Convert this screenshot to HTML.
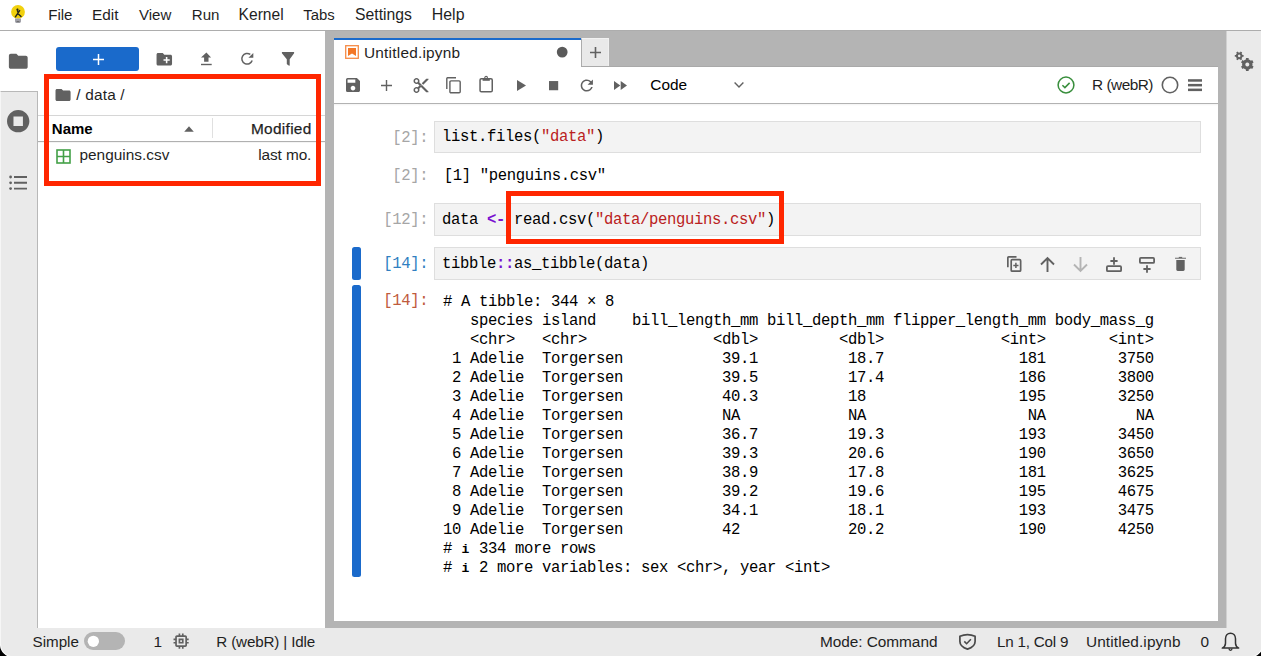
<!DOCTYPE html>
<html><head><meta charset="utf-8">
<style>
*{box-sizing:border-box;margin:0;padding:0}
html,body{width:1261px;height:656px;overflow:hidden;background:#fff;font-family:"Liberation Sans",sans-serif;color:#212121}
.a{position:absolute}
.t{position:absolute;white-space:pre;line-height:1}
.m{font-family:"Liberation Mono",monospace}
svg{position:absolute;display:block;overflow:visible}
</style></head><body>
<div class="a" style="left:0px;top:0px;width:1261px;height:31px;background:#fff;border-bottom:1px solid #adadad"></div>
<div class="t" style="left:48.20px;top:7.22px;font-size:15.1px;color:#1f1f1f;font-weight:400;">File</div>
<div class="t" style="left:92.00px;top:6.96px;font-size:15.4px;color:#1f1f1f;font-weight:400;">Edit</div>
<div class="t" style="left:139.00px;top:7.26px;font-size:15.05px;color:#1f1f1f;font-weight:400;">View</div>
<div class="t" style="left:191.80px;top:7.22px;font-size:15.1px;color:#1f1f1f;font-weight:400;">Run</div>
<div class="t" style="left:238.60px;top:6.79px;font-size:15.6px;color:#1f1f1f;font-weight:400;">Kernel</div>
<div class="t" style="left:303.20px;top:7.89px;font-size:14.9px;color:#1f1f1f;font-weight:400;">Tabs</div>
<div class="t" style="left:355.00px;top:6.67px;font-size:15.75px;color:#1f1f1f;font-weight:400;">Settings</div>
<div class="t" style="left:431.80px;top:6.54px;font-size:15.9px;color:#1f1f1f;font-weight:400;">Help</div>
<svg style="left:0px;top:0px;" width="36" height="30" viewBox="0 0 36 30"><circle cx="18" cy="11.9" r="6.9" fill="#f1d10e"/><path d="M15 18.6h6v2.6c0 1-.8 1.8-1.8 1.8h-2.4c-1 0-1.8-.8-1.8-1.8z" fill="#a0a0a8"/><path d="M16.6 21.6h2.8" stroke="#6a6a6a" stroke-width="1"/><path d="M15.4 16.8l4.2-6.2M17.6 13.3l3.4 3.2M17.4 9.6l.3 2" stroke="#2a2a1a" stroke-width="1.5" fill="none" stroke-linecap="round"/><circle cx="17.5" cy="9.5" r="1" fill="#2a2a1a"/></svg>
<div class="a" style="left:0px;top:31px;width:38px;height:597px;background:#fff"></div>
<div class="a" style="left:0px;top:91px;width:38px;height:537px;background:#eaeaea;border-top:1px solid #b8b8b8;border-right:1px solid #b8b8b8"></div>
<svg style="left:7.2px;top:50.1px;" width="22.56" height="22.56" viewBox="0 0 24 24"><path d="M10 4H4c-1.1 0-1.99.9-1.99 2L2 18c0 1.1.9 2 2 2h16c1.1 0 2-.9 2-2V8c0-1.1-.9-2-2-2h-8l-2-2z" fill="#616161"/></svg>
<svg style="left:6.3px;top:109.4px;" width="24.4" height="24.4" viewBox="0 0 24 24"><path d="M12 1C5.9 1 1 5.9 1 12s4.9 11 11 11 11-4.9 11-11S18.1 1 12 1zm4.65 15.65h-9.3v-9.3h9.3z" fill="#616161"/></svg>
<svg style="left:9px;top:174.5px;" width="19" height="16" viewBox="0 0 19 16"><circle cx="1.6" cy="2" r="1.4" fill="#616161"/><circle cx="1.6" cy="7.8" r="1.4" fill="#616161"/><circle cx="1.6" cy="13.6" r="1.4" fill="#616161"/><path d="M5 2h13M5 7.8h13M5 13.6h13" stroke="#616161" stroke-width="1.9"/></svg>
<div class="a" style="left:38px;top:31px;width:287px;height:597px;background:#fff"></div>
<div class="a" style="left:56px;top:47px;width:83px;height:24px;background:#1a6acb;border-radius:3px"></div>
<svg style="left:92.8px;top:53.8px;" width="11" height="11" viewBox="0 0 11 11"><path d="M5.5 0v11M0 5.5h11" stroke="#fff" stroke-width="1.5"/></svg>
<svg style="left:155px;top:50px;" width="18.6" height="18.6" viewBox="0 0 24 24"><path d="M20 6h-8l-2-2H4c-1.11 0-1.99.89-1.99 2L2 18c0 1.11.89 2 2 2h16c1.11 0 2-.89 2-2V8c0-1.11-.89-2-2-2zm-1 8h-3v3h-2v-3h-3v-2h3V9h2v3h3v2z" fill="#616161"/></svg>
<svg style="left:200px;top:52px;" width="13" height="14" viewBox="0 0 13 14"><path d="M6.4.4L11.1 5.5H8.5v4.2H4.1V5.5H1z" fill="#616161"/><rect x="1" y="11.8" width="10.7" height="1.4" fill="#616161"/></svg>
<svg style="left:240px;top:52px;" width="15" height="14" viewBox="0 0 15 14"><path d="M12.2 8.6A5.35 5.35 0 1 1 10.3 2.4" fill="none" stroke="#616161" stroke-width="1.5"/><path d="M13.3 .9v4.9H8.4z" fill="#616161"/></svg>
<svg style="left:281px;top:51px;" width="14" height="16" viewBox="0 0 14 16"><path d="M.9 1.1H13.1V2.3L8.7 8.2V14.8L7.2 14.3 5.8 13.1V8.2L.9 2.3z" fill="#616161"/></svg>
<svg style="left:54.4px;top:85.9px;" width="18.1" height="18.1" viewBox="0 0 24 24"><path d="M10 4H4c-1.1 0-1.99.9-1.99 2L2 18c0 1.1.9 2 2 2h16c1.1 0 2-.9 2-2V8c0-1.1-.9-2-2-2h-8l-2-2z" fill="#616161"/></svg>
<div class="t" style="left:76.20px;top:86.96px;font-size:15.4px;color:#1f1f1f;font-weight:400;letter-spacing:.2px">/ data /</div>
<div class="a" style="left:38px;top:115px;width:287px;height:1px;background:#d6d6d6"></div>
<div class="t" style="left:51.80px;top:121.30px;font-size:15px;color:#000;font-weight:700;">Name</div>
<svg style="left:183.5px;top:126px;" width="10" height="6" viewBox="0 0 10 6"><path d="M5 .3L9.8 5.7H.2z" fill="#616161"/></svg>
<div class="a" style="left:212px;top:118px;width:1px;height:20px;background:#e0e0e0"></div>
<div class="t" style="left:251.00px;top:121.16px;font-size:15.4px;color:#1f1f1f;font-weight:400;letter-spacing:.3px;-webkit-text-stroke:.25px #1f1f1f">Modified</div>
<div class="a" style="left:38px;top:141px;width:287px;height:1px;background:#b0b0b0"></div>
<div class="a" style="left:38px;top:142px;width:287px;height:1px;background:#f4f4f4"></div>
<svg style="left:56px;top:149px;" width="15" height="15" viewBox="0 0 15 15"><rect x="1" y="1" width="13" height="13" fill="none" stroke="#43a047" stroke-width="1.6"/><path d="M7.5 1v13M1 7.5h13" stroke="#43a047" stroke-width="1.6"/></svg>
<div class="t" style="left:79.50px;top:147.46px;font-size:15.4px;color:#1f1f1f;font-weight:400;">penguins.csv</div>
<div class="t" style="left:258.20px;top:147.46px;font-size:15.4px;color:#1f1f1f;font-weight:400;letter-spacing:-.1px">last mo.</div>
<div class="a" style="left:325px;top:31px;width:901px;height:597px;background:#b4b4b4"></div>
<div class="a" style="left:1226px;top:31px;width:35px;height:597px;background:#eaeaea;border-left:1px solid #d0d0d0"></div>
<svg style="left:1226px;top:40px;" width="35" height="40" viewBox="1226 40 35 40"><path fill-rule="evenodd" fill="#616161" d="M1245.09 59.79 L1245.95 59.48 L1245.93 58.04 L1248.67 58.04 L1248.65 59.48 L1249.51 59.79 L1250.27 60.23 L1250.98 60.82 L1252.20 60.08 L1253.58 62.46 L1252.32 63.15 L1252.48 64.06 L1252.48 64.94 L1252.32 65.85 L1253.58 66.54 L1252.20 68.92 L1250.98 68.18 L1250.27 68.77 L1249.51 69.21 L1248.65 69.52 L1248.67 70.96 L1245.93 70.96 L1245.95 69.52 L1245.09 69.21 L1244.33 68.77 L1243.62 68.18 L1242.40 68.92 L1241.02 66.54 L1242.28 65.85 L1242.12 64.94 L1242.12 64.06 L1242.28 63.15 L1241.02 62.46 L1242.40 60.08 L1243.62 60.82 L1244.33 60.23Z M1247.3 62.5a2 2 0 1 0 .01 0z"/><path fill-rule="evenodd" fill="#616161" d="M1239.48 52.51 L1240.08 52.62 L1240.59 51.62 L1242.21 52.56 L1241.60 53.50 L1241.99 53.96 L1242.28 54.45 L1242.48 55.02 L1243.60 54.96 L1243.60 56.84 L1242.48 56.78 L1242.28 57.35 L1241.99 57.84 L1241.60 58.30 L1242.21 59.24 L1240.59 60.18 L1240.08 59.18 L1239.48 59.29 L1238.92 59.29 L1238.32 59.18 L1237.81 60.18 L1236.19 59.24 L1236.80 58.30 L1236.41 57.84 L1236.12 57.35 L1235.92 56.78 L1234.80 56.84 L1234.80 54.96 L1235.92 55.02 L1236.12 54.45 L1236.41 53.96 L1236.80 53.50 L1236.19 52.56 L1237.81 51.62 L1238.32 52.62 L1238.92 52.51Z M1239.2 54.6a1.3 1.3 0 1 0 .01 0z"/></svg>
<div class="a" style="left:334px;top:38px;width:247px;height:29px;background:#fff;border-top:2px solid #1a6acb"></div>
<div class="a" style="left:581px;top:38px;width:28px;height:28px;background:#e9e9e9;border-top:1px solid #f2f2f2;border-right:1px solid #f0f0f0;border-left:1px solid #acacac"></div>
<div class="a" style="left:581px;top:66px;width:637px;height:1px;background:#a9a9a9"></div>
<svg style="left:589.8px;top:46.8px;" width="11" height="11" viewBox="0 0 11 11"><path d="M5.5 0v11M0 5.5h11" stroke="#616161" stroke-width="1.6"/></svg>
<svg style="left:345px;top:45px;" width="14" height="14" viewBox="0 0 14 14"><rect x=".7" y=".7" width="12.6" height="12.6" fill="none" stroke="#f37726" stroke-width="1.3" opacity=".85"/><path d="M3 3h8v8L7 8.6 3 11z" fill="#f37726"/></svg>
<div class="t" style="left:364.00px;top:44.96px;font-size:15.4px;color:#1f1f1f;font-weight:400;letter-spacing:.22px">Untitled.ipynb</div>
<svg style="left:555px;top:45px;" width="14" height="14" viewBox="0 0 14 14"><circle cx="7.2" cy="7.1" r="5.4" fill="#5a5a5a"/></svg>
<div class="a" style="left:334px;top:67px;width:884px;height:554px;background:#fff"></div>
<div class="a" style="left:334px;top:103px;width:884px;height:1px;background:#b2b2b2"></div>
<div class="a" style="left:334px;top:104px;width:884px;height:2px;background:linear-gradient(#f3f3f3,#fff)"></div>
<svg style="left:346px;top:78px;" width="14" height="14" viewBox="3 3 18 18"><path d="M17 3H5a2 2 0 0 0-2 2v14a2 2 0 0 0 2 2h14c1.1 0 2-.9 2-2V7l-4-4zm-5 16c-1.66 0-3-1.34-3-3s1.34-3 3-3 3 1.34 3 3-1.34 3-3 3zm3-10H5V5h10v4z" fill="#616161"/></svg>
<svg style="left:380.5px;top:79.5px;" width="11" height="11" viewBox="0 0 11 11"><path d="M5.5 0v11M0 5.5h11" stroke="#616161" stroke-width="1.4"/></svg>
<svg style="left:412.5px;top:77.5px;" width="16" height="15" viewBox="2 2 20 20"><path d="M9.64 7.64c.23-.5.36-1.05.36-1.64 0-2.21-1.79-4-4-4S2 3.79 2 6s1.79 4 4 4c.59 0 1.14-.13 1.64-.36L10 12l-2.36 2.36C7.14 14.13 6.59 14 6 14c-2.21 0-4 1.79-4 4s1.79 4 4 4 4-1.79 4-4c0-.59-.13-1.14-.36-1.64L12 14l7 7h3v-1L9.64 7.64zM6 8c-1.1 0-2-.89-2-2s.9-2 2-2 2 .89 2 2-.9 2-2 2zm0 12c-1.1 0-2-.89-2-2s.9-2 2-2 2 .89 2 2-.9 2-2 2zm6-7.5c-.28 0-.5-.22-.5-.5s.22-.5.5-.5.5.22.5.5-.22.5-.5.5zM19 3l-6 6 2 2 7-7V3z" fill="#616161"/></svg>
<svg style="left:445.5px;top:77px;" width="15" height="16.5" viewBox="0 0 15 16.5"><path d="M.8 12V1.4c0-.4.3-.6.6-.6H10" fill="none" stroke="#616161" stroke-width="1.4"/><rect x="3.9" y="3.9" width="10.3" height="11.9" rx="1.1" fill="none" stroke="#616161" stroke-width="1.4"/></svg>
<svg style="left:479px;top:75px;" width="14" height="18" viewBox="0 0 14 18"><rect x="1.05" y="3.65" width="12.2" height="13.1" rx="1.3" fill="none" stroke="#616161" stroke-width="1.5"/><rect x="3.6" y="3.3" width="7.2" height="2.5" fill="#616161"/><circle cx="7.1" cy="2.75" r="1.35" fill="none" stroke="#616161" stroke-width="1.1"/></svg>
<svg style="left:517px;top:80px;" width="9" height="11" viewBox="0 0 9 11"><path d="M0 0L9 5.5 0 11z" fill="#616161"/></svg>
<svg style="left:548.7px;top:80.5px;" width="9.2" height="9.3" viewBox="0 0 10 10"><rect width="10" height="10" fill="#616161"/></svg>
<svg style="left:579.5px;top:79px;" width="14" height="13" viewBox="4 3.5 16.5 17"><path d="M17.65 6.35A7.96 7.96 0 0 0 12 4c-4.42 0-7.99 3.58-7.99 8s3.57 8 7.99 8c3.73 0 6.84-2.55 7.73-6h-2.08A5.99 5.99 0 0 1 12 18c-3.31 0-6-2.69-6-6s2.69-6 6-6c1.66 0 3.14.69 4.22 1.78L13 11h7V4z" fill="#616161"/></svg>
<svg style="left:614px;top:80.5px;" width="13" height="9" viewBox="0 0 13 9"><path d="M0 0l6.3 4.5L0 9zM6.7 0L13 4.5 6.7 9z" fill="#616161"/></svg>
<div class="t" style="left:650.30px;top:76.96px;font-size:15.4px;color:#000;font-weight:400;">Code</div>
<svg style="left:733.5px;top:82px;" width="10" height="6" viewBox="0 0 10 6"><path d="M.6.6L5 5 9.4.6" fill="none" stroke="#616161" stroke-width="1.4"/></svg>
<svg style="left:1056.8px;top:75.7px;" width="18" height="18" viewBox="0 0 18 18"><circle cx="9" cy="9" r="7.9" fill="none" stroke="#388e3c" stroke-width="1.5"/><path d="M5.4 9.2l2.5 2.4 4.7-4.7" fill="none" stroke="#388e3c" stroke-width="1.5"/></svg>
<div class="t" style="left:1092.00px;top:77.46px;font-size:15.4px;color:#1f1f1f;font-weight:400;letter-spacing:-.5px">R (webR)</div>
<svg style="left:1160.8px;top:75.6px;" width="18" height="18" viewBox="0 0 18 18"><circle cx="9" cy="9" r="7.7" fill="none" stroke="#616161" stroke-width="1.6"/></svg>
<svg style="left:1188px;top:79px;" width="14" height="13" viewBox="0 0 14 13"><rect x="0" y=".2" width="14" height="2.5" fill="#616161"/><rect x="0" y="4.9" width="14" height="2.5" fill="#616161"/><rect x="0" y="9.6" width="14" height="2.5" fill="#616161"/></svg>
<div class="a" style="left:434px;top:121px;width:767px;height:32px;background:#f3f3f3;border:1px solid #dedede"></div>
<div class="t m" style="left:392.30px;top:130.84px;font-size:15.6px;letter-spacing:-0.360px;color:#a6a6a6;">[2]:</div>
<div class="t m" style="left:442.00px;top:129.64px;font-size:15.6px;letter-spacing:-0.360px;color:#000;">list.files(<span style="color:#ba2121">"data"</span>)</div>
<div class="t m" style="left:392.30px;top:168.84px;font-size:15.6px;letter-spacing:-0.360px;color:#a6a6a6;">[2]:</div>
<div class="t m" style="left:443.80px;top:169.04px;font-size:15.6px;letter-spacing:-0.360px;color:#000;">[1] "penguins.csv"</div>
<div class="a" style="left:434px;top:203px;width:767px;height:33px;background:#f3f3f3;border:1px solid #dedede"></div>
<div class="t m" style="left:383.30px;top:213.34px;font-size:15.6px;letter-spacing:-0.360px;color:#a6a6a6;">[12]:</div>
<div class="t m" style="left:442.00px;top:212.54px;font-size:15.6px;letter-spacing:-0.360px;color:#000;">data <span style="color:#7a12d0;font-weight:700">&lt;-</span> read.csv(<span style="color:#ba2121">"data/penguins.csv"</span>)</div>
<div class="a" style="left:352px;top:247px;width:9px;height:33px;background:#1a6acb;border-radius:2.5px"></div>
<div class="a" style="left:434px;top:247px;width:767px;height:33px;background:#f3f3f3;border:1px solid #dedede"></div>
<div class="t m" style="left:383.30px;top:257.34px;font-size:15.6px;letter-spacing:-0.360px;color:#307fc1;">[14]:</div>
<div class="t m" style="left:442.00px;top:256.54px;font-size:15.6px;letter-spacing:-0.360px;color:#000;">tibble<span style="color:#7a12d0;font-weight:700">::</span>as_tibble(data)</div>
<svg style="left:1007px;top:256px;" width="14.5" height="16" viewBox="0 0 14.5 16"><path d="M.85 11.2V1.6c0-.5.3-.75.75-.75h7.9" fill="none" stroke="#616161" stroke-width="1.7"/><rect x="4.2" y="3.7" width="9.45" height="11.45" rx="1" fill="none" stroke="#616161" stroke-width="1.7"/><path d="M8.9 6.8v5.2M6.3 9.4h5.2" stroke="#616161" stroke-width="1.5"/></svg>
<svg style="left:1040px;top:257px;" width="15" height="15" viewBox="0 0 15 15"><path d="M7.5 15V1.4M1 7.5l6.5-6.5L14 7.5" fill="none" stroke="#616161" stroke-width="1.9"/></svg>
<svg style="left:1073px;top:257px;" width="15" height="15" viewBox="0 0 15 15"><path d="M7.5 0v13.6M1 7.5l6.5 6.5L14 7.5" fill="none" stroke="#b4b4b4" stroke-width="1.9"/></svg>
<svg style="left:1106px;top:257px;" width="16" height="15" viewBox="0 0 16 15"><rect x=".9" y="9.2" width="14.2" height="5" rx="1" fill="none" stroke="#616161" stroke-width="1.8"/><path d="M8 .3v7.4M4.4 4h7.2" stroke="#616161" stroke-width="1.8"/></svg>
<svg style="left:1139px;top:257px;" width="16" height="16" viewBox="0 0 16 16"><rect x=".9" y=".9" width="14.2" height="5" rx="1" fill="none" stroke="#616161" stroke-width="1.8"/><path d="M8 8.2v7.6M4.4 12h7.2" stroke="#616161" stroke-width="1.8"/></svg>
<svg style="left:1175px;top:257px;" width="11" height="14" viewBox="0 0 11 14"><path d="M1.3 3h8.4v9.6c0 .8-.6 1.4-1.4 1.4H2.7c-.8 0-1.4-.6-1.4-1.4z" fill="#616161"/><path d="M0 1.3h11" stroke="#8a8a8a" stroke-width="1.3"/><path d="M3.8.4h3.4" stroke="#616161" stroke-width="1"/></svg>
<div class="a" style="left:352px;top:285px;width:9px;height:292px;background:#1a6acb;border-radius:2.5px"></div>
<div class="t m" style="left:383.30px;top:294.44px;font-size:15.6px;letter-spacing:-0.360px;color:#bf5b3d;">[14]:</div>
<div class="t m" style="left:443.00px;top:294.64px;font-size:15.6px;letter-spacing:-0.360px;color:#000;"># A tibble: 344 × 8</div>
<div class="t m" style="left:443.00px;top:313.64px;font-size:15.6px;letter-spacing:-0.360px;color:#000;">   species island    bill_length_mm bill_depth_mm flipper_length_mm body_mass_g</div>
<div class="t m" style="left:443.00px;top:332.64px;font-size:15.6px;letter-spacing:-0.360px;color:#000;">   &lt;chr&gt;   &lt;chr&gt;              &lt;dbl&gt;         &lt;dbl&gt;             &lt;int&gt;       &lt;int&gt;</div>
<div class="t m" style="left:443.00px;top:351.64px;font-size:15.6px;letter-spacing:-0.360px;color:#000;"> 1 Adelie  Torgersen           39.1          18.7               181        3750</div>
<div class="t m" style="left:443.00px;top:370.64px;font-size:15.6px;letter-spacing:-0.360px;color:#000;"> 2 Adelie  Torgersen           39.5          17.4               186        3800</div>
<div class="t m" style="left:443.00px;top:389.64px;font-size:15.6px;letter-spacing:-0.360px;color:#000;"> 3 Adelie  Torgersen           40.3          18                 195        3250</div>
<div class="t m" style="left:443.00px;top:408.64px;font-size:15.6px;letter-spacing:-0.360px;color:#000;"> 4 Adelie  Torgersen           NA            NA                  NA          NA</div>
<div class="t m" style="left:443.00px;top:427.64px;font-size:15.6px;letter-spacing:-0.360px;color:#000;"> 5 Adelie  Torgersen           36.7          19.3               193        3450</div>
<div class="t m" style="left:443.00px;top:446.64px;font-size:15.6px;letter-spacing:-0.360px;color:#000;"> 6 Adelie  Torgersen           39.3          20.6               190        3650</div>
<div class="t m" style="left:443.00px;top:465.64px;font-size:15.6px;letter-spacing:-0.360px;color:#000;"> 7 Adelie  Torgersen           38.9          17.8               181        3625</div>
<div class="t m" style="left:443.00px;top:484.64px;font-size:15.6px;letter-spacing:-0.360px;color:#000;"> 8 Adelie  Torgersen           39.2          19.6               195        4675</div>
<div class="t m" style="left:443.00px;top:503.64px;font-size:15.6px;letter-spacing:-0.360px;color:#000;"> 9 Adelie  Torgersen           34.1          18.1               193        3475</div>
<div class="t m" style="left:443.00px;top:522.64px;font-size:15.6px;letter-spacing:-0.360px;color:#000;">10 Adelie  Torgersen           42            20.2               190        4250</div>
<div class="t m" style="left:443.00px;top:541.64px;font-size:15.6px;letter-spacing:-0.360px;color:#000;"># <span style="display:inline-block;width:9px;text-align:center;font-weight:700;font-size:13px;letter-spacing:0">i</span> 334 more rows</div>
<div class="t m" style="left:443.00px;top:560.64px;font-size:15.6px;letter-spacing:-0.360px;color:#000;"># <span style="display:inline-block;width:9px;text-align:center;font-weight:700;font-size:13px;letter-spacing:0">i</span> 2 more variables: sex &lt;chr&gt;, year &lt;int&gt;</div>
<div class="a" style="left:0px;top:628px;width:1261px;height:28px;background:#eaeaea"></div>
<div class="t" style="left:32.50px;top:634.13px;font-size:15.2px;color:#1f1f1f;font-weight:400;">Simple</div>
<div class="a" style="left:84px;top:632px;width:41px;height:18px;background:#b4b4b4;border-radius:9px"></div>
<svg style="left:87px;top:635px;" width="13" height="13" viewBox="0 0 13 13"><circle cx="6.35" cy="6.35" r="5.65" fill="#fff"/></svg>
<div class="t" style="left:153.50px;top:633.96px;font-size:15.4px;color:#1f1f1f;font-weight:400;">1</div>
<svg style="left:171.4px;top:631.2px;" width="20.2" height="20.2" viewBox="0 0 24 24"><path d="M15 9H9v6h6V9zm-2 4h-2v-2h2v2zm8-2V9h-2V7c0-1.1-.9-2-2-2h-2V3h-2v2h-2V3H9v2H7c-1.1 0-2 .9-2 2v2H3v2h2v2H3v2h2v2c0 1.1.9 2 2 2h2v2h2v-2h2v2h2v-2h2c1.1 0 2-.9 2-2v-2h2v-2h-2v-2h2zm-4 6H7V7h10v10z" fill="#616161"/></svg>
<div class="t" style="left:216.30px;top:634.13px;font-size:15.2px;color:#1f1f1f;font-weight:400;letter-spacing:-.15px">R (webR) | Idle</div>
<div class="t" style="left:820.00px;top:633.96px;font-size:15.4px;color:#1f1f1f;font-weight:400;letter-spacing:-.05px">Mode: Command</div>
<svg style="left:958px;top:632.5px;" width="19" height="17" viewBox="0 0 19 17"><path d="M1.9 3.3Q9.5 -.2 17.1 3.3V8.4C17.1 12 13.8 14.6 9.5 16.1 5.2 14.6 1.9 12 1.9 8.4Z" fill="none" stroke="#4a4a4a" stroke-width="1.7" stroke-linejoin="round"/><path d="M6.3 8.4l2.3 2.3 4.3-4.4" fill="none" stroke="#4a4a4a" stroke-width="1.6"/></svg>
<div class="t" style="left:997.00px;top:634.13px;font-size:15.2px;color:#1f1f1f;font-weight:400;letter-spacing:-.2px">Ln 1, Col 9</div>
<div class="t" style="left:1086.00px;top:633.96px;font-size:15.4px;color:#1f1f1f;font-weight:400;letter-spacing:.1px">Untitled.ipynb</div>
<div class="t" style="left:1200.50px;top:633.96px;font-size:15.4px;color:#1f1f1f;font-weight:400;">0</div>
<svg style="left:1221px;top:632px;" width="19" height="20" viewBox="0 0 19 20"><path d="M9.5 1.2c-3 0-5 2.4-5 5.6v4.4c0 2.3-1.3 3.8-3.2 4.9h16.4c-1.9-1.1-3.2-2.6-3.2-4.9V6.8c0-3.2-2-5.6-5-5.6z" fill="none" stroke="#333" stroke-width="1.5" stroke-linejoin="round"/><path d="M8 16.6c0 1.1.6 1.8 1.5 1.8s1.5-.7 1.5-1.8" fill="none" stroke="#333" stroke-width="1.3"/></svg>
<div class="a" style="left:44px;top:74px;width:277px;height:112px;border:5px solid #ff2600"></div>
<div class="a" style="left:506px;top:191px;width:278px;height:53px;border:5px solid #ff2600"></div>
<div class="a" style="left:0px;top:31px;width:1px;height:615px;background:rgba(255,255,255,.55)"></div>
<svg style="left:0;top:636px" width="20" height="20" viewBox="0 636 20 20"><path d="M0 644.4A13 13 0 0 0 13 657.4H0z" fill="#000"/><path d="M.5 644.4A12.5 12.5 0 0 0 13 656.9" fill="none" stroke="#fff" stroke-opacity=".75" stroke-width="1"/></svg>
<svg style="left:1240px;top:636px" width="21" height="20" viewBox="1240 636 21 20"><path d="M1263.1 644.4A13 13 0 0 1 1250.1 657.4H1263.1z" fill="#000"/><path d="M1262.6 644.4A12.5 12.5 0 0 1 1250.1 656.9" fill="none" stroke="#fff" stroke-opacity=".75" stroke-width="1"/></svg>
</body></html>
